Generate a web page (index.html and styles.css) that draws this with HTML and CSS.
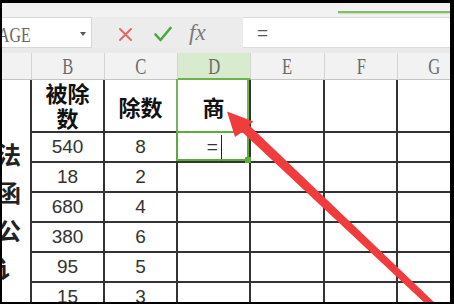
FILE: index.html
```html
<!DOCTYPE html>
<html>
<head>
<meta charset="utf-8">
<link rel="stylesheet" href="styles.css">
</head>
<body>
<div class="screen">
  <div class="tabbar"><div class="tabline"></div></div>
  <div class="fbar">
    <div class="namebox"><span class="nbtext">AGE</span><span class="caret"></span></div>
    <div class="fbtns">
      <svg class="ic-x" width="15" height="15" viewBox="0 0 15 15"><path d="M2 2 L13 13 M13 2 L2 13" stroke="#e26a6a" stroke-width="2" fill="none" stroke-linecap="round"/></svg>
      <svg class="ic-ok" width="18" height="16" viewBox="0 0 18 16"><path d="M1.5 8.5 L6.5 14 L16.5 2" stroke="#4aa843" stroke-width="2.6" fill="none" stroke-linecap="round" stroke-linejoin="round"/></svg>
      <span class="fx">fx</span>
    </div>
    <div class="finput">=</div>
  </div>
  <div class="gap"></div>
  <div class="sheet">
    <div class="ch"></div>
    <div class="ch"><span class="cl">B</span></div>
    <div class="ch"><span class="cl">C</span></div>
    <div class="ch active"><span class="cl">D</span></div>
    <div class="ch"><span class="cl">E</span></div>
    <div class="ch"><span class="cl">F</span></div>
    <div class="ch"><span class="cl">G</span></div>

    <div class="a"></div>
    <div class="c hd"><span class="two">被除<br>数</span></div>
    <div class="c hd">除数</div>
    <div class="c hd">商<span class="colsel"></span></div>
    <div class="c"></div>
    <div class="c"></div>
    <div class="c"></div>

    <div class="a acol"><span>法</span><span>函</span><span>公</span><span>讠</span></div>
    <div class="c n">540</div>
    <div class="c n">8</div>
    <div class="c n edit"><span>=</span><span class="cursor"></span><span class="sel"><span class="handle"></span></span></div>
    <div class="c"></div>
    <div class="c"></div>
    <div class="c"></div>

    <div class="c n">18</div>
    <div class="c n">2</div>
    <div class="c"></div>
    <div class="c"></div>
    <div class="c"></div>
    <div class="c"></div>

    <div class="c n">680</div>
    <div class="c n">4</div>
    <div class="c"></div>
    <div class="c"></div>
    <div class="c"></div>
    <div class="c"></div>

    <div class="c n">380</div>
    <div class="c n">6</div>
    <div class="c"></div>
    <div class="c"></div>
    <div class="c"></div>
    <div class="c"></div>

    <div class="c n">95</div>
    <div class="c n">5</div>
    <div class="c"></div>
    <div class="c"></div>
    <div class="c"></div>
    <div class="c"></div>

    <div class="c n">15</div>
    <div class="c n">3</div>
    <div class="c"></div>
    <div class="c"></div>
    <div class="c"></div>
    <div class="c"></div>
  </div>
  <svg class="arrow" width="448" height="299" viewBox="0 0 448 299">
    <polygon points="225,108.5 251.5,118.5 246.9,121.9 433.4,300.5 428.6,305.5 240.1,129.1 233,134" fill="#f03c3c"/>
  </svg>
</div>
</body>
</html>
```

FILE: styles.css
```css
* { box-sizing: border-box; }
html, body { margin: 0; padding: 0; }
body {
  background: #000;
  width: 454px;
  height: 304px;
  overflow: hidden;
  font-family: "Liberation Sans", Arial, sans-serif;
}
.screen {
  position: relative;
  margin: 3px 0 0 2px;
  width: 448px;
  height: 299px;
  background: #fff;
  overflow: hidden;
}
.tabbar {
  height: 14px;
  background: #f2f2f2;
  padding-top: 8px;
}
.tabline {
  margin-left: 336px;
  height: 2px;
  background: #86bd68;
  box-shadow: 0 1px 1px #c6e0b8;
}
.fbar {
  height: 31px;
  display: flex;
  background: #ececec;
}
.namebox {
  width: 90px;
  background: #fff;
  border: 1px solid #d6d6d6;
  border-left: none;
  display: flex;
  align-items: center;
  overflow: hidden;
  position: relative;
}
.nbtext {
  display: inline-block;
  font-family: "Liberation Serif", "DejaVu Serif", serif;
  font-size: 22px;
  color: #666;
  margin-left: -4px;
  padding-top: 4px;
  transform: scaleX(0.72);
  transform-origin: left center;
  flex: 1;
}
.caret {
  width: 0;
  height: 0;
  border-left: 3.5px solid transparent;
  border-right: 3.5px solid transparent;
  border-top: 4px solid #555;
  margin-right: 5px;
  margin-top: 2px;
}
.fbtns {
  width: 151px;
  display: flex;
  align-items: center;
  padding-left: 26px;
  padding-top: 3px;
}
.ic-x { margin-right: 21px; }
.ic-ok { margin-right: 17px; }
.fx {
  font-family: "Liberation Serif", "DejaVu Serif", serif;
  font-style: italic;
  font-size: 23px;
  color: #7a7a7a;
  margin-top: -3px;
}
.finput {
  flex: 1;
  background: #fff;
  border-top: 1px solid #dcdcdc;
  border-bottom: 1px solid #dcdcdc;
  padding-left: 14px;
  font-size: 19px;
  color: #555;
  line-height: 29px;
}
.gap {
  height: 5px;
  background: #eaeaea;
}
.sheet {
  display: grid;
  grid-template-columns: 30px 73px 73px 73px 74px 73px 73px;
  grid-template-rows: 27px 53px repeat(6, 30px);
}
.ch {
  background: #f2f2f2;
  border-right: 1px solid #d4d4d4;
  border-bottom: 1px solid #c4c4c4;
  display: flex;
  align-items: center;
  justify-content: center;
}
.ch.active {
  background: #d9ebcf;
  border-bottom: 2px solid #6db24d;
}
.cl {
  display: inline-block;
  font-family: "Liberation Serif", "DejaVu Serif", serif;
  font-size: 23px;
  color: #6a6a6a;
  transform: scaleX(0.72);
  padding-top: 2px;
}
.a {
  border-right: 2px solid #333;
}
.acol {
  grid-column: 1;
  grid-row: 3 / span 6;
  display: flex;
  flex-direction: column;
  padding-top: 2px;
  font-family: "Noto Sans CJK SC", sans-serif;
  font-weight: 700;
  font-size: 24px;
  line-height: 38px;
  color: #222;
}
.acol span { margin-left: -5px; }
.c {
  position: relative;
  border-right: 2px solid #333;
  border-bottom: 2px solid #333;
  display: flex;
  align-items: center;
  justify-content: center;
  text-align: center;
}
.hd {
  font-family: "Noto Sans CJK SC", sans-serif;
  font-weight: 700;
  font-size: 22px;
  line-height: 26px;
  color: #111;
}
.two { display: block; line-height: 25px; padding-bottom: 1px; }
.n {
  font-family: "Liberation Sans", Arial, sans-serif;
  font-size: 19px;
  color: #333;
}
.colsel {
  position: absolute;
  left: -2px;
  top: -1px;
  right: 0;
  bottom: 0;
  border-left: 2px solid #74b555;
  border-right: 2px solid #74b555;
}
.edit { padding-left: 2px; }
.cursor {
  display: inline-block;
  width: 1.5px;
  height: 27px;
  background: #222;
  margin-left: 3px;
  margin-top: 2px;
}
.sel {
  position: absolute;
  left: -2px;
  top: -2px;
  right: 0;
  bottom: 0;
  border: 2px solid #5cab3b;
}
.handle {
  position: absolute;
  right: -4px;
  bottom: -4px;
  width: 6px;
  height: 6px;
  background: #5cab3b;
}
.arrow {
  position: absolute;
  left: 0;
  top: 0;
}
```
